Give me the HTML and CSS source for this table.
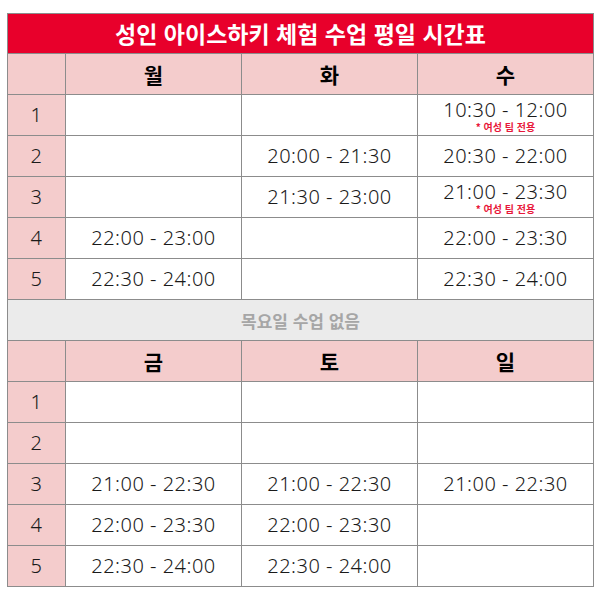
FILE: index.html
```html
<!DOCTYPE html>
<html lang="ko">
<head>
<meta charset="utf-8">
<link rel="stylesheet" href="styles.css">
</head>
<body>
<div class="tt">
  <div class="cell title">성인 아이스하키 체험 수업 평일 시간표</div>

  <div class="cell head"></div><div class="cell head">월</div><div class="cell head">화</div><div class="cell head">수</div>
  <div class="cell num">1</div><div class="cell"></div><div class="cell"></div><div class="cell two"><div class="t">10:30 - 12:00</div><div class="note">* 여성 팀 전용</div></div>
  <div class="cell num">2</div><div class="cell"></div><div class="cell">20:00 - 21:30</div><div class="cell">20:30 - 22:00</div>
  <div class="cell num">3</div><div class="cell"></div><div class="cell">21:30 - 23:00</div><div class="cell two"><div class="t">21:00 - 23:30</div><div class="note">* 여성 팀 전용</div></div>
  <div class="cell num">4</div><div class="cell">22:00 - 23:00</div><div class="cell"></div><div class="cell">22:00 - 23:30</div>
  <div class="cell num">5</div><div class="cell">22:30 - 24:00</div><div class="cell"></div><div class="cell">22:30 - 24:00</div>

  <div class="cell gap">목요일 수업 없음</div>

  <div class="cell head"></div><div class="cell head">금</div><div class="cell head">토</div><div class="cell head">일</div>
  <div class="cell num">1</div><div class="cell"></div><div class="cell"></div><div class="cell"></div>
  <div class="cell num">2</div><div class="cell"></div><div class="cell"></div><div class="cell"></div>
  <div class="cell num">3</div><div class="cell">21:00 - 22:30</div><div class="cell">21:00 - 22:30</div><div class="cell">21:00 - 22:30</div>
  <div class="cell num">4</div><div class="cell">22:00 - 23:30</div><div class="cell">22:00 - 23:30</div><div class="cell"></div>
  <div class="cell num">5</div><div class="cell">22:30 - 24:00</div><div class="cell">22:30 - 24:00</div><div class="cell"></div>
</div>
</body>
</html>
```
FILE: styles.css
```css
html, body { margin: 0; padding: 0; background: #fff; }
body { font-family: "Noto Sans", "Noto Sans CJK KR", sans-serif; color: #1a1a1a; }
.tt {
  margin: 13px 0 0 7px;
  width: 587px;
  display: grid;
  grid-template-columns: 57px 175px 175px 175px;
  grid-template-rows: 39px repeat(13, 40px);
  gap: 1px;
  padding: 1px;
  box-sizing: border-box;
  background: #8c8c8c;
}
.cell {
  background: #fff;
  display: flex;
  flex-direction: column;
  align-items: center;
  justify-content: center;
  font-size: 20px;
  font-weight: 350;
  letter-spacing: 0.5px;
  line-height: 1;
  white-space: nowrap;
  overflow: hidden;
}
.title {
  grid-column: 1 / -1;
  background: #e8002b;
  color: #fff;
  font-family: "Noto Sans CJK KR", sans-serif;
  font-weight: 700;
  font-size: 23px;
  letter-spacing: 0;
}
.head {
  background: #f4cccc;
  font-family: "Noto Sans CJK KR", sans-serif;
  font-weight: 700;
  font-size: 21px;
  letter-spacing: 0;
  color: #000;
}
.num { background: #f4cccc; }
.two { justify-content: flex-start; padding-top: 4px; }
.two .t { line-height: 21px; }
.note {
  color: #e8173a;
  font-family: "Noto Sans CJK KR", sans-serif;
  font-size: 10px;
  font-weight: 700;
  letter-spacing: 0;
  line-height: 12px;
  margin-top: 1px;
}
.gap {
  grid-column: 1 / -1;
  background: #ebebeb;
  color: #a6a6a6;
  font-family: "Noto Sans CJK KR", sans-serif;
  font-size: 17px;
  font-weight: 700;
  letter-spacing: 0;
}
```
